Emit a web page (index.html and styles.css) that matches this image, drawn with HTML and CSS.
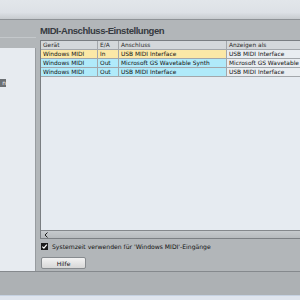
FILE: index.html
```html
<html lang="de">
<head>
    <meta charset="UTF-8">
    <title>MIDI-Anschluss-Einstellungen</title>
    <link rel="stylesheet" href="styles.css">
</head>
<body>
    <div class="topbar"></div>

    <div class="main">
        <aside class="side">
            <div class="side-head"></div>
            <div class="side-panel">
                <div class="side-tab">n</div>
            </div>
        </aside>

        <section class="content">
            <h1 class="title">MIDI-Anschluss-Einstellungen</h1>

            <div class="grid-wrap">
                <div class="grid">
                    <div class="row head">
                        <span>Gerät</span><span>E/A</span><span>Anschluss</span><span>Anzeigen als</span>
                    </div>
                    <div class="row in">
                        <span>Windows MIDI</span><span>In</span><span>USB MIDI Interface</span><span>USB MIDI Interface</span>
                    </div>
                    <div class="row out">
                        <span>Windows MIDI</span><span>Out</span><span>Microsoft GS Wavetable Synth</span><span>Microsoft GS Wavetable Synth</span>
                    </div>
                    <div class="row out">
                        <span>Windows MIDI</span><span>Out</span><span>USB MIDI Interface</span><span>USB MIDI Interface</span>
                    </div>
                </div>
                <div class="hscroll">
                    <span class="arrow">
                        <svg width="4" height="6" viewBox="0 0 4 6"><path d="M3.5 0.5 L1 3 L3.5 5.5" fill="none" stroke="#1e1e1e" stroke-width="1"/></svg>
                    </span>
                </div>
            </div>

            <label class="check">
                <svg class="box" width="7" height="7" viewBox="0 0 7 7">
                    <rect width="7" height="7" fill="#1b1b1b"/>
                    <path d="M1.3 3.6 L2.9 5.2 L5.8 1.6" fill="none" stroke="#fff" stroke-width="1.2"/>
                </svg>
                <span>Systemzeit verwenden für 'Windows MIDI'-Eingänge</span>
            </label>

            <button class="btn">Hilfe</button>
        </section>
    </div>

    <div class="footer"></div>
    <div class="bottom"></div>
</body>
</html>
```

FILE: styles.css
```css
:root {
    --panel-gray: #b2b6b9;
    --light: #e7ebf0;
    --line: #7a7e82;
    --cell-line: #a3a7ab;
    --small: 'DejaVu Sans', 'Liberation Sans', sans-serif;
}

body {
    margin: 0;
    width: 300px;
    height: 300px;
    overflow: hidden;
    background: var(--panel-gray);
    font-family: 'Liberation Sans', Arial, sans-serif;
    color: #1c1c1c;
}

.topbar {
    height: 19px;
    background: linear-gradient(#e2e6ea 0%, #dde1e6 65%, #c7cbcf 100%);
    border-bottom: 1px solid #8e9296;
}

.main {
    display: flex;
    height: 251px;
}

/* left column */
.side {
    width: 36px;
    display: flex;
    flex-direction: column;
}

.side-head {
    height: 17px;
    border-bottom: 1px solid #c4c8cb;
    margin-bottom: 10px;
}

.side-panel {
    flex: 1;
    background: var(--light);
    border-right: 1px solid #979b9f;
    padding-top: 31px;
}

.side-tab {
    width: 6px;
    height: 8px;
    background: #6c7074;
    color: #f0f0f0;
    font-family: var(--small);
    font-size: 5.9px;
    line-height: 8px;
    text-align: right;
    overflow: hidden;
}

/* right column */
.content {
    flex: 1;
    min-width: 0;
    padding-left: 4px;
    display: flex;
    flex-direction: column;
}

.title {
    margin: 0;
    height: 20px;
    padding-top: 2px;
    box-sizing: border-box;
    font-size: 9.5px;
    line-height: 18px;
    font-weight: bold;
    letter-spacing: -0.45px;
    color: #363a40;
    white-space: nowrap;
}

.grid-wrap {
    border-top: 1px solid var(--line);
    border-left: 1px solid var(--line);
    overflow: hidden;
}

.grid {
    height: 189px;
    background: #e6ebf1;
    width: 400px;
}

.row {
    display: grid;
    grid-template-columns: 57px 21px 108px 140px;
    height: 9px;
}

.row span {
    box-sizing: border-box;
    height: 9px;
    padding-left: 2px;
    border-right: 1px solid var(--cell-line);
    border-bottom: 1px solid var(--cell-line);
    font-family: var(--small);
    font-size: 5.9px;
    line-height: 8px;
    color: #111;
    white-space: nowrap;
    overflow: hidden;
}

.head span {
    background: #d4d8db;
    color: #2a2a2a;
}

.in span {
    background: #fbe8a7;
}

.out span {
    background: #b0eafa;
}

.row span:last-child {
    background: #e9edf1;
}

.head span:last-child {
    background: #d4d8db;
}

.hscroll {
    height: 7px;
    border-top: 1px solid #84888c;
    border-bottom: 1px solid #7c8084;
    background: linear-gradient(#c6cacd, #b6babd);
    display: flex;
}

.arrow {
    width: 9px;
    display: flex;
    align-items: center;
    justify-content: center;
}

.check {
    display: flex;
    align-items: center;
    gap: 4px;
    margin-top: 4px;
    height: 7px;
    padding-left: 1px;
    font-family: var(--small);
    font-size: 6.1px;
    color: #111;
    white-space: nowrap;
}

.box {
    flex: none;
}

.btn {
    margin: 7px 0 0 1px;
    width: 45px;
    height: 12px;
    padding: 0;
    border: 1px solid #878b8f;
    border-radius: 2px;
    background: linear-gradient(#f3f3f3, #d7d7d7);
    font-family: var(--small);
    font-size: 6px;
    color: #111;
}

.footer {
    height: 23px;
    border-top: 1px solid #85898d;
    border-bottom: 1px solid #c6d2e2;
    background: #adb1b4;
}

.bottom {
    height: 4px;
    background: #dfe5ee;
}
```
